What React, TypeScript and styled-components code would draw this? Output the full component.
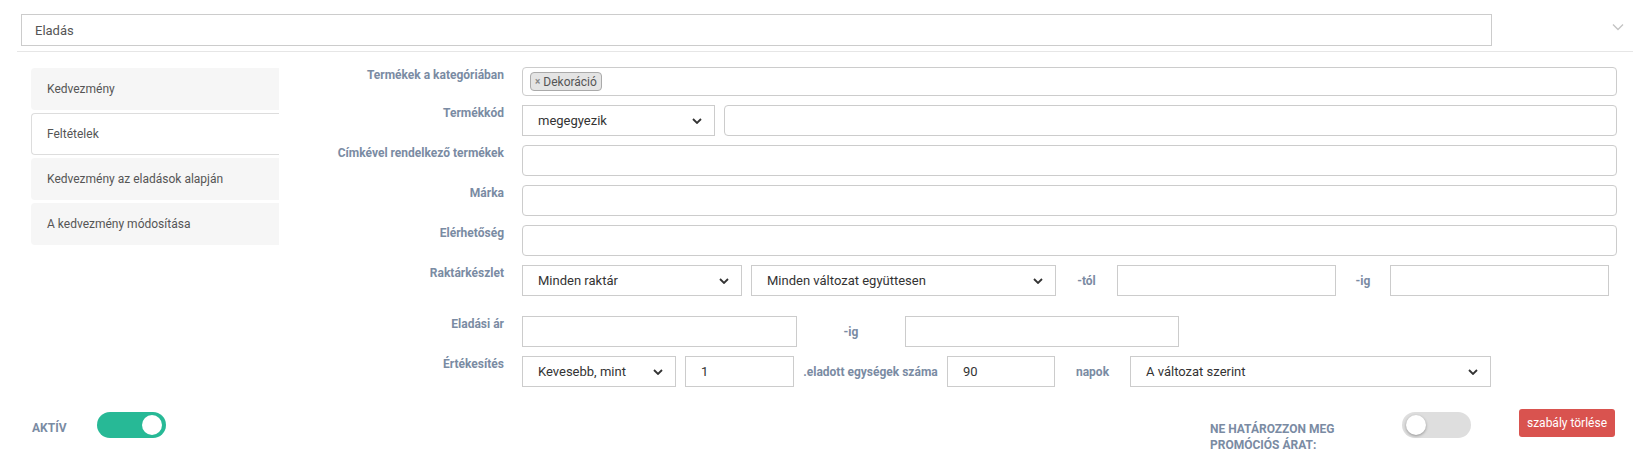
import styled, { createGlobalStyle } from "styled-components";

const GlobalStyle = createGlobalStyle`
  body {
    margin: 0;
    background: #ffffff;
    font-family: Roboto, "Liberation Sans", Arial, sans-serif;
  }
`;

const LABEL = "#7a8ba3";

const Page = styled.div`
  width: 1648px;
  height: 456px;
  overflow: hidden;
`;

const Header = styled.div`
  display: flex;
  align-items: center;
  padding: 14px 0 0 21px;
`;

const HeaderSelect = styled.div`
  width: 1471px;
  height: 32px;
  box-sizing: border-box;
  border: 1px solid #cccccc;
  padding: 0 13px;
  display: flex;
  align-items: center;
  font-size: 13px;
  color: #555555;
`;

const Collapse = styled.div`
  margin-left: 120px;
  margin-top: -6px;
  display: flex;
`;

const Divider = styled.div`
  margin: 5px 0 0 17px;
  width: 1616px;
  border-top: 1px solid #e6e6e6;
`;

const Body = styled.div`
  display: grid;
  grid-template-columns: 248px 1fr;
  padding: 15px 31px 0 31px;
`;

const Tabs = styled.div`
  display: flex;
  flex-direction: column;
  padding-top: 1px;
`;

const Tab = styled.div<{ $active?: boolean }>`
  height: 42px;
  margin-bottom: 3px;
  box-sizing: border-box;
  display: flex;
  align-items: center;
  padding-left: 15px;
  font-size: 12px;
  color: #555555;
  background: ${(p) => (p.$active ? "#ffffff" : "#f6f6f6")};
  border: 1px solid ${(p) => (p.$active ? "#dddddd" : "#f6f6f6")};
  border-right: none;
  border-radius: 4px 0 0 4px;
`;

const Form = styled.div`
  display: flex;
  flex-direction: column;
`;

const Row = styled.div<{ $gapAfter?: number }>`
  display: grid;
  grid-template-columns: 225px 1fr;
  column-gap: 18px;
  margin-bottom: ${(p) => p.$gapAfter ?? 9}px;
`;

const Label = styled.div`
  text-align: right;
  font-size: 12px;
  line-height: 16px;
  font-weight: 700;
  color: ${LABEL};
`;

const Controls = styled.div`
  display: flex;
  align-items: center;
  gap: 9px;
`;

const TextInput = styled.div<{ $w?: number; $rounded?: boolean; $h?: number }>`
  ${(p) => (p.$w ? `width: ${p.$w}px; flex: none;` : "flex: 1;")}
  height: ${(p) => p.$h ?? 31}px;
  box-sizing: border-box;
  border: 1px solid #cccccc;
  border-radius: ${(p) => (p.$rounded ? 4 : 0)}px;
  padding: 0 15px;
  display: flex;
  align-items: center;
  gap: 4px;
  font-size: 13px;
  color: #333333;
`;

const TagField = styled(TextInput)`
  padding: 0 7px;
`;

const Tag = styled.span`
  display: inline-flex;
  align-items: center;
  gap: 3px;
  height: 19px;
  box-sizing: border-box;
  padding: 0 4px;
  background: #e4e4e4;
  border: 1px solid #aaaaaa;
  border-radius: 4px;
  font-size: 12px;
  color: #555555;

  b {
    font-size: 10px;
    color: #888888;
  }
`;

const SelectBox = styled.div<{ $w: number }>`
  width: ${(p) => p.$w}px;
  flex: none;
  height: 31px;
  box-sizing: border-box;
  border: 1px solid #cccccc;
  padding: 0 12px 0 15px;
  display: flex;
  align-items: center;
  justify-content: space-between;
  font-size: 13px;
  color: #333333;
`;

const InlineLabel = styled.div<{ $w: number }>`
  width: ${(p) => p.$w}px;
  flex: none;
  margin: 0 -9px;
  text-align: center;
  font-size: 12px;
  font-weight: 700;
  color: ${LABEL};
`;

const Footer = styled.div`
  display: flex;
  justify-content: space-between;
  align-items: flex-start;
  padding: 13px 33px 0 32px;
`;

const Group = styled.div`
  display: flex;
  align-items: flex-start;
`;

const FooterLabel = styled.div<{ $w?: number; $top: number }>`
  ${(p) => (p.$w ? `width: ${p.$w}px;` : "")}
  margin-top: ${(p) => p.$top}px;
  font-size: 12px;
  line-height: 16px;
  font-weight: 700;
  color: ${LABEL};
  text-transform: uppercase;
`;

const Toggle = styled.div<{ $on?: boolean; $ml: number }>`
  position: relative;
  margin-left: ${(p) => p.$ml}px;
  margin-top: 3px;
  width: 69px;
  height: 26px;
  border-radius: 13px;
  background: ${(p) => (p.$on ? "#27b996" : "#dedede")};

  &::after {
    content: "";
    position: absolute;
    top: 3px;
    ${(p) => (p.$on ? "right: 4px;" : "left: 4px;")}
    width: 20px;
    height: 20px;
    border-radius: 50%;
    background: #ffffff;
    box-shadow: ${(p) => (p.$on ? "none" : "0 1px 3px rgba(0,0,0,0.35)")};
  }
`;

const DangerButton = styled.button`
  margin-left: 48px;
  height: 28px;
  width: 96px;
  border: none;
  border-radius: 3px;
  background: #d9534f;
  color: #ffffff;
  font-family: Roboto, "Liberation Sans", Arial, sans-serif;
  font-size: 12px;
  padding: 0;
`;

const Chevron = ({ color = "#333", size = 10 }: { color?: string; size?: number }) => (
  <svg width={size} height={size * 0.6} viewBox="0 0 10 6">
    <path d="M1 1l4 4 4-4" fill="none" stroke={color} strokeWidth="1.8" />
  </svg>
);

const Select = ({ w, value }: { w: number; value: string }) => (
  <SelectBox $w={w}>
    <span>{value}</span>
    <Chevron />
  </SelectBox>
);

export default function App() {
  return (
    <Page>
      <GlobalStyle />
      <Header>
        <HeaderSelect>Eladás</HeaderSelect>
        <Collapse>
          <svg width="12" height="8" viewBox="0 0 12 8">
            <path d="M1 1.5l5 5 5-5" fill="none" stroke="#c4c4c4" strokeWidth="1.4" />
          </svg>
        </Collapse>
      </Header>
      <Divider />
      <Body>
        <Tabs>
          <Tab>Kedvezmény</Tab>
          <Tab $active>Feltételek</Tab>
          <Tab>Kedvezmény az eladások alapján</Tab>
          <Tab>A kedvezmény módosítása</Tab>
        </Tabs>
        <Form>
          <Row>
            <Label>Termékek a kategóriában</Label>
            <Controls>
              <TagField $rounded $h={29}>
                <Tag>
                  <b>×</b>Dekoráció
                </Tag>
              </TagField>
            </Controls>
          </Row>
          <Row>
            <Label>Termékkód</Label>
            <Controls>
              <Select w={193} value="megegyezik" />
              <TextInput $rounded />
            </Controls>
          </Row>
          <Row>
            <Label>Címkével rendelkező termékek</Label>
            <Controls>
              <TextInput $rounded />
            </Controls>
          </Row>
          <Row>
            <Label>Márka</Label>
            <Controls>
              <TextInput $rounded />
            </Controls>
          </Row>
          <Row>
            <Label>Elérhetőség</Label>
            <Controls>
              <TextInput $rounded />
            </Controls>
          </Row>
          <Row $gapAfter={20}>
            <Label>Raktárkészlet</Label>
            <Controls>
              <Select w={220} value="Minden raktár" />
              <Select w={305} value="Minden változat együttesen" />
              <InlineLabel $w={61}>-tól</InlineLabel>
              <TextInput $w={219} />
              <InlineLabel $w={54}>-ig</InlineLabel>
              <TextInput $w={219} />
            </Controls>
          </Row>
          <Row>
            <Label>Eladási ár</Label>
            <Controls>
              <TextInput $w={275} />
              <InlineLabel $w={108}>-ig</InlineLabel>
              <TextInput $w={274} />
            </Controls>
          </Row>
          <Row>
            <Label>Értékesítés</Label>
            <Controls>
              <Select w={154} value="Kevesebb, mint" />
              <TextInput $w={109}>1</TextInput>
              <InlineLabel $w={153}>.eladott egységek száma</InlineLabel>
              <TextInput $w={108}>90</TextInput>
              <InlineLabel $w={75}>napok</InlineLabel>
              <Select w={361} value="A változat szerint" />
            </Controls>
          </Row>
        </Form>
      </Body>
      <Footer>
        <Group>
          <FooterLabel $top={11}>Aktív</FooterLabel>
          <Toggle $on $ml={31} />
        </Group>
        <Group>
          <FooterLabel $w={160} $top={12}>
            Ne határozzon meg promóciós árat:
          </FooterLabel>
          <Toggle $ml={32} />
          <DangerButton>szabály törlése</DangerButton>
        </Group>
      </Footer>
    </Page>
  );
}
